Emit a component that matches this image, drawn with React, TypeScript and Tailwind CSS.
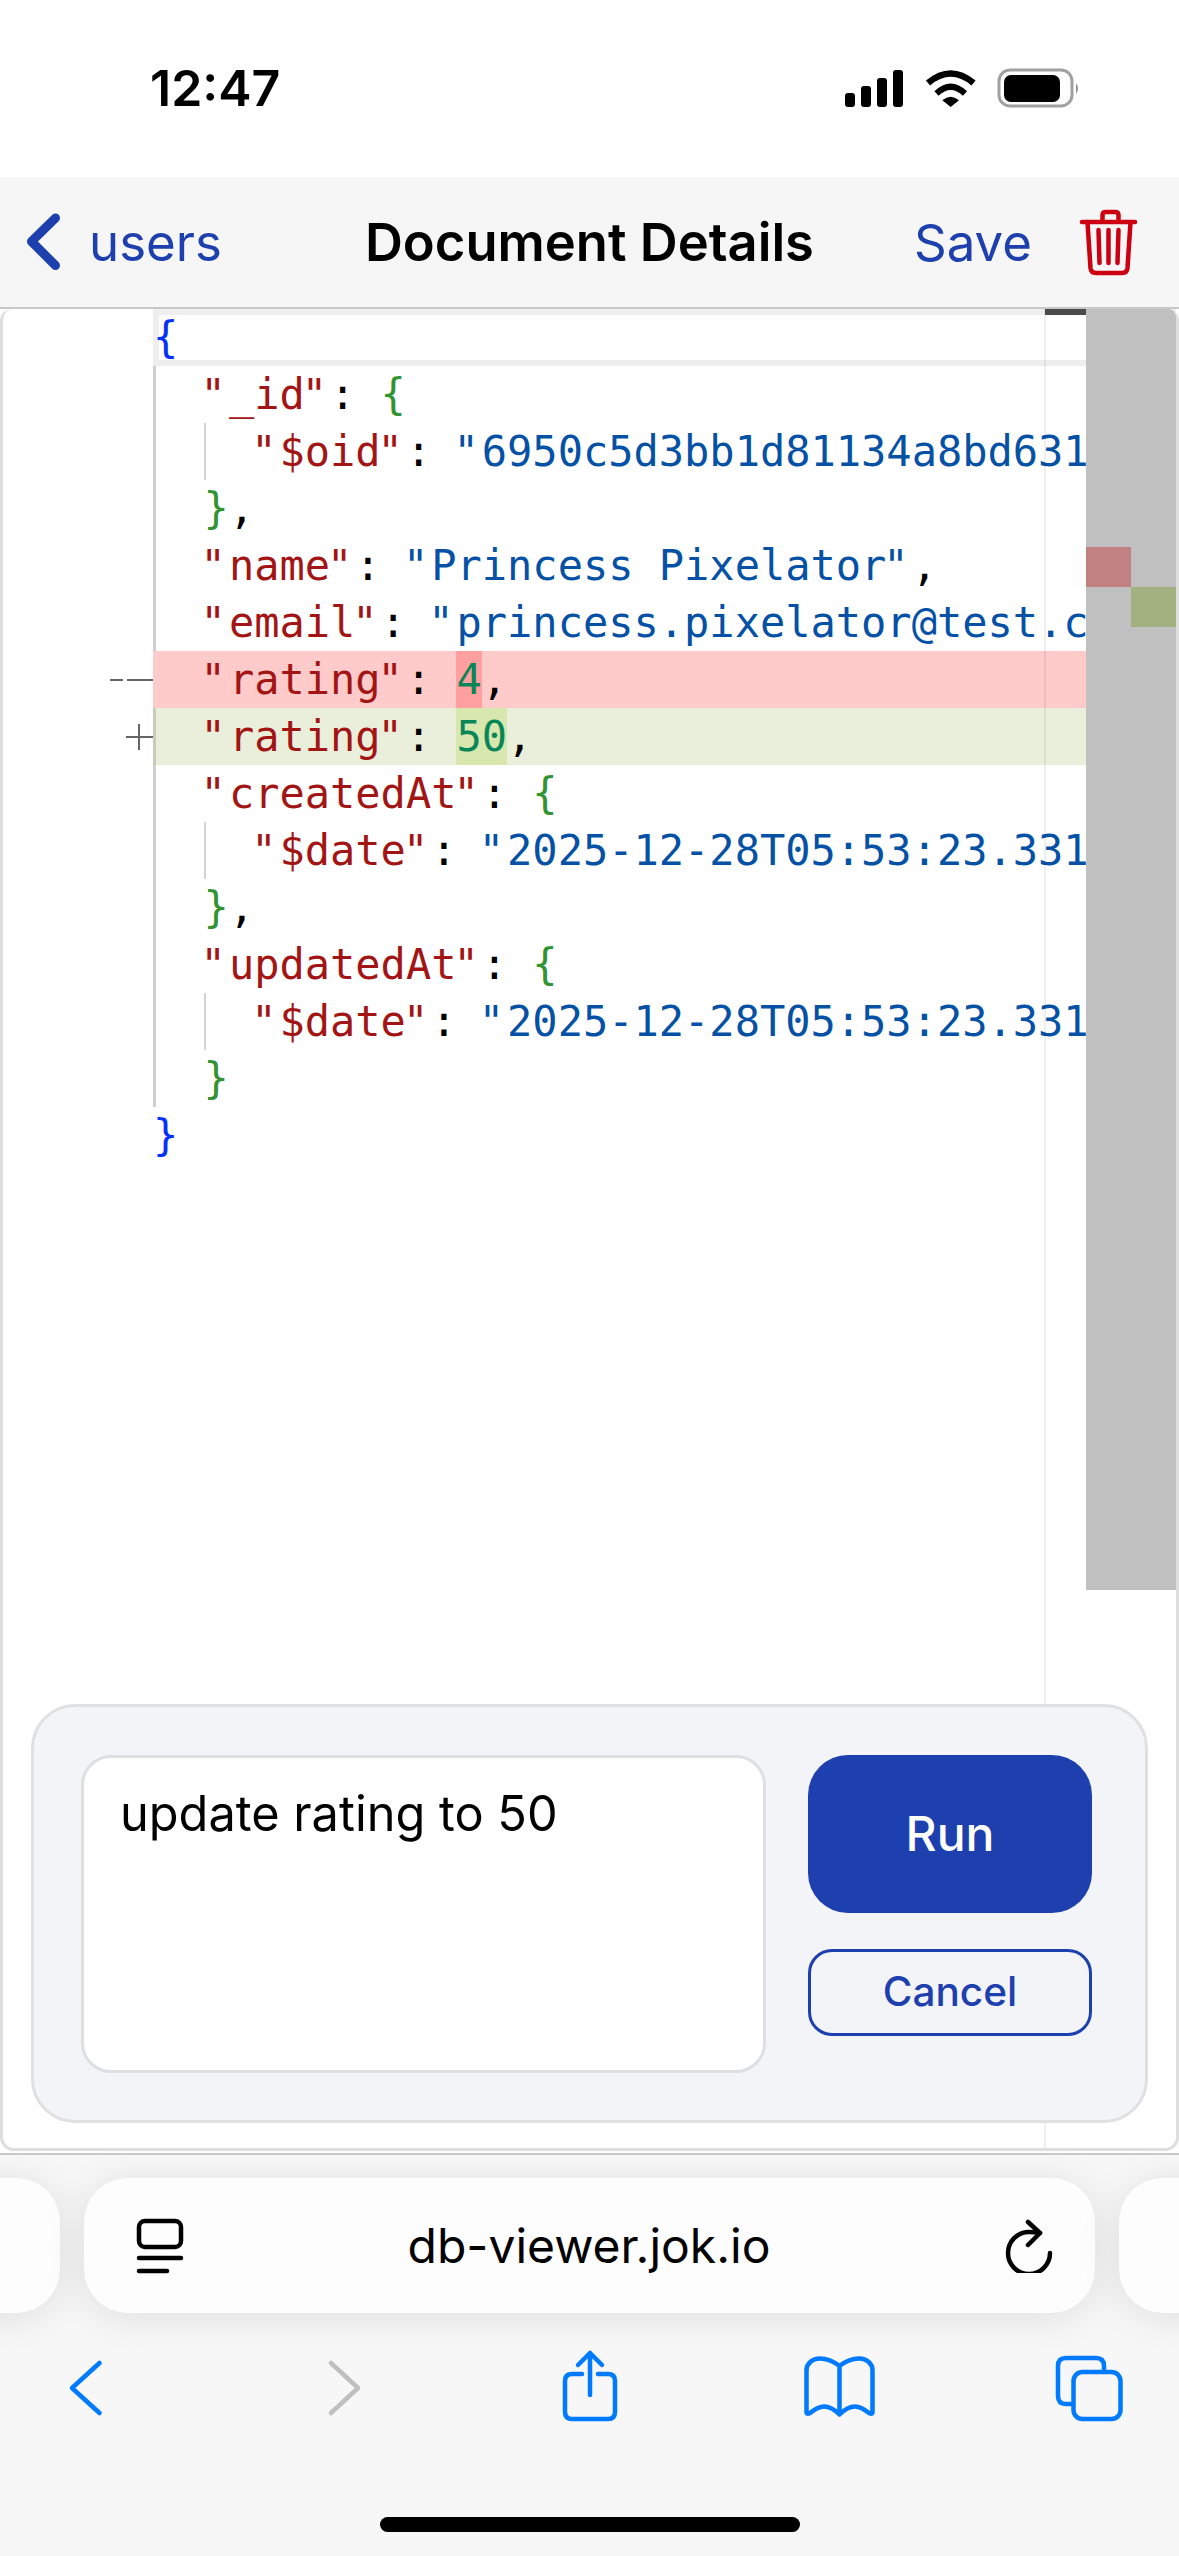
import React from "react";

// The reference's monospace draws its quote marks a little further left in their cell.
function quoted(text: string) {
  return text.split('"').map((part, i) =>
    i === 0 ? (
      <React.Fragment key={i}>{part}</React.Fragment>
    ) : (
      <React.Fragment key={i}>
        <span className="-ml-[3px] mr-[3px]">"</span>
        {part}
      </React.Fragment>
    )
  );
}

const K = ({ children }: { children: string }) => <span className="text-[#a31515]">{quoted(children)}</span>;
const S = ({ children }: { children: string }) => <span className="text-[#0451a5]">{quoted(children)}</span>;
const B1 = ({ children }: { children: React.ReactNode }) => <span className="text-[#0431fa]">{children}</span>;
const B2 = ({ children }: { children: React.ReactNode }) => <span className="text-[#319331]">{children}</span>;

function Row({
  children,
  gutter,
  cellClass = "shadow-[inset_3px_0_0_#cfcfcf]",
  guide = false,
}: {
  children: React.ReactNode;
  gutter?: React.ReactNode;
  cellClass?: string;
  guide?: boolean;
}) {
  return (
    <div className="flex h-[57px]">
      <div className="w-[150px] shrink-0 flex items-center justify-end">{gutter}</div>
      <div className={`relative flex-1 min-w-0 overflow-hidden whitespace-pre leading-[57px] ${cellClass}`}>
        {guide && <div className="absolute left-[51px] top-0 h-full w-[2px] bg-[#d3d3d3]" />}
        {children}
      </div>
    </div>
  );
}

export default function App() {
  return (
    <div className="relative flex h-[2556px] w-[1179px] flex-col overflow-hidden bg-white font-['Inter',sans-serif] text-black">
      {/* status bar */}
      <div className="flex h-[177px] shrink-0 items-start bg-white pl-[150px] pt-[59px]">
        <div className="text-[50px] font-semibold leading-[58px]">12:47</div>
        <svg className="ml-auto mr-[98px] mt-[8px]" width="240" height="42" viewBox="842 66 240 42">
          <rect x="846" y="92" width="10" height="14" rx="3" fill="#000" />
          <rect x="862" y="85" width="10" height="21" rx="3" fill="#000" />
          <rect x="878" y="77" width="10" height="29" rx="3" fill="#000" />
          <rect x="894" y="69" width="10" height="37" rx="3" fill="#000" />
          <path d="M929 82Q951.7 63 974.5 82" fill="none" stroke="#000" strokeWidth="6.5" />
          <path d="M937.5 92.5Q951.7 79 966 92.5" fill="none" stroke="#000" strokeWidth="6" />
          <path d="M943.3 99.3Q951.7 92 960 99.3L951.7 106Z" fill="#000" />
          <rect x="1000" y="69" width="73" height="36" rx="11" fill="none" stroke="#a0a0a0" strokeWidth="3" />
          <rect x="1005" y="74" width="56" height="27" rx="7" fill="#000" />
          <path d="M1077 82Q1081 87.5 1077 93Z" fill="#909090" />
        </svg>
      </div>

      {/* nav bar */}
      <div className="flex h-[132px] shrink-0 items-center border-b-2 border-[#c8c8c8] bg-[#f6f6f7] pl-[24px]">
        <svg width="40" height="64" viewBox="24 212 40 64" fill="none" stroke="#1e40af" strokeWidth="9" strokeLinecap="round" strokeLinejoin="round">
          <path d="M55.5 220L31.5 243.5L55.5 267.5" />
        </svg>
        <span className="ml-[25px] text-[51px] leading-none text-[#1e40af]">users</span>
        <span className="ml-[143px] text-[52.5px] font-semibold leading-none">Document Details</span>
        <span className="ml-auto text-[51px] leading-none text-[#1e40af]">Save</span>
        <svg className="ml-[46px] mr-[39px]" width="62" height="70" viewBox="1078 208 62 70" fill="none" stroke="#cc0011" strokeWidth="4.5" strokeLinecap="round" strokeLinejoin="round">
          <path d="M1082 223H1135" />
          <path d="M1102.5 222V216Q1102.5 213 1106 213H1115Q1118.5 213 1118.5 216V222" />
          <path d="M1087.5 223L1090.5 269Q1091 274 1096 274H1122Q1127 274 1127.5 269L1130.5 223" />
          <path d="M1098.5 231L1099.5 264M1108.5 231V264M1118.5 231L1117.5 264" />
        </svg>
      </div>

      {/* editor */}
      <div className="relative flex-1 min-h-0 rounded-t-[12px] rounded-b-[14px] border-x-[3px] border-b-[3px] border-[#dedede] bg-white font-['DejaVu_Sans_Mono',monospace] text-[42px]">
        <Row cellClass="shadow-[inset_0_0_0_6px_#eeeeee]">
          <B1>{"{"}</B1>
        </Row>
        <Row>
          {"  "}<K>{'"_id"'}</K>: <B2>{"{"}</B2>
        </Row>
        <Row guide>
          {"    "}<K>{'"$oid"'}</K>: <S>{'"6950c5d3bb1d81134a8bd6312f"'}</S>
        </Row>
        <Row>
          {"  "}<B2>{"}"}</B2>,
        </Row>
        <Row>
          {"  "}<K>{'"name"'}</K>: <S>{'"Princess Pixelator"'}</S>,
        </Row>
        <Row>
          {"  "}<K>{'"email"'}</K>: <S>{'"princess.pixelator@test.com"'}</S>,
        </Row>
        <Row
          cellClass="bg-[#ffcaca]"
          gutter={
            <svg width="44" height="10" viewBox="0 0 44 10" stroke="#666" strokeWidth="2">
              <path d="M1 5H14M18 5H44" />
            </svg>
          }
        >
          {"  "}<K>{'"rating"'}</K>: <span className="inline-block h-[57px] bg-[#ff9f9f] text-[#098658]">4</span>,
        </Row>
        <Row
          cellClass="bg-[#e9efdb] shadow-[inset_3px_0_0_#c8ccb8]"
          gutter={
            <svg width="28" height="28" viewBox="0 0 28 28" stroke="#666" strokeWidth="2">
              <path d="M1 14H28M14 1V27" />
            </svg>
          }
        >
          {"  "}<K>{'"rating"'}</K>: <span className="inline-block h-[57px] bg-[#d7e7ae] text-[#098658]">50</span>,
        </Row>
        <Row>
          {"  "}<K>{'"createdAt"'}</K>: <B2>{"{"}</B2>
        </Row>
        <Row guide>
          {"    "}<K>{'"$date"'}</K>: <S>{'"2025-12-28T05:53:23.331Z"'}</S>
        </Row>
        <Row>
          {"  "}<B2>{"}"}</B2>,
        </Row>
        <Row>
          {"  "}<K>{'"updatedAt"'}</K>: <B2>{"{"}</B2>
        </Row>
        <Row guide>
          {"    "}<K>{'"$date"'}</K>: <S>{'"2025-12-28T05:53:23.331Z"'}</S>
        </Row>
        <Row>
          {"  "}<B2>{"}"}</B2>
        </Row>
        <Row cellClass="">
          <B1>{"}"}</B1>
        </Row>

        {/* print margin line */}
        <div className="absolute left-[1041px] top-0 bottom-0 w-[2px] bg-[#00000010]" />
        {/* overview ruler */}
        <div className="absolute left-[1042px] top-0 h-[6px] w-[41px] bg-[#4a4a4a]" />
        <div className="absolute left-[1083px] top-0 h-[1281px] w-[90px] rounded-tr-[8px] bg-[#c0c0c0]">
          <div className="mt-[238px] h-[40px] w-[45px] bg-[#c18081]" />
          <div className="ml-[45px] h-[40px] w-[45px] bg-[#a3b180]" />
        </div>

        {/* prompt panel */}
        <div className="absolute left-[28px] top-[1395px] flex h-[419px] w-[1117px] items-start gap-[42px] rounded-[44px] border-[3px] border-[#e0e0e1] bg-[#f3f4f8] pl-[47px] pt-[48px] font-['Inter',sans-serif]">
          <div className="h-[318px] w-[685px] shrink-0 rounded-[30px] border-[3px] border-[#dedfe1] bg-white pl-[36px] pt-[27px] text-[48.7px] leading-[58px]">
            update rating to 50
          </div>
          <div className="flex w-[284px] flex-col gap-[36px]">
            <button className="flex h-[158px] items-center justify-center rounded-[40px] bg-[#1e40af] text-[48px] font-medium text-white">
              Run
            </button>
            <button className="flex h-[87px] items-center justify-center rounded-[24px] border-[3px] border-[#1e40af] text-[40.5px] font-medium text-[#1e40af]">
              Cancel
            </button>
          </div>
        </div>
      </div>

      {/* gap + separator */}
      <div className="h-[2px] shrink-0 bg-white" />
      <div className="h-[2px] shrink-0 bg-[#c8c8c8]" />

      {/* safari chrome */}
      <div className="flex h-[401px] shrink-0 flex-col bg-[#f7f7f8]">
        <div className="mt-[23px] flex justify-center gap-[24px]">
          <div className="h-[135px] w-[1011px] shrink-0 rounded-[44px] bg-[#fdfdfd] shadow-[0_4px_40px_rgba(0,0,0,0.10)]" />
          <div className="flex h-[135px] w-[1011px] shrink-0 items-center rounded-[44px] bg-[#fdfdfd] pl-[51px] pr-[38px] shadow-[0_4px_40px_rgba(0,0,0,0.10)]">
            <svg width="50" height="58" viewBox="135 2217 50 58" fill="none" stroke="#000" strokeWidth="4.5" strokeLinecap="round">
              <rect x="139" y="2221" width="42" height="26" rx="6" />
              <path d="M139 2258H181M139 2271H167" />
            </svg>
            <div className="flex-1 pr-[10px] text-center text-[48px] leading-none">db-viewer.jok.io</div>
            <svg width="54" height="54" viewBox="1003 2214 54 54" fill="none" stroke="#000" strokeWidth="4.5" strokeLinecap="round" strokeLinejoin="round">
              <path d="M1050 2248A21 21 0 1 1 1029 2227C1033 2227 1037 2227.5 1040 2228" />
              <path d="M1028 2217L1040 2228L1028 2240" />
            </svg>
          </div>
          <div className="h-[135px] w-[1011px] shrink-0 rounded-[44px] bg-[#fdfdfd] shadow-[0_4px_40px_rgba(0,0,0,0.10)]" />
        </div>

        <div className="mt-[35px] flex pl-[68px]" >
          <svg width="36" height="78" viewBox="68 2348 36 78" fill="none" stroke="#007aff" strokeWidth="4.5" strokeLinecap="round" strokeLinejoin="round">
            <path d="M99.5 2363L72 2388L99.5 2413" />
          </svg>
          <svg className="ml-[223px]" width="36" height="78" viewBox="327 2348 36 78" fill="none" stroke="#c0c0c0" strokeWidth="4.5" strokeLinecap="round" strokeLinejoin="round">
            <path d="M331 2363L358 2388L331 2413" />
          </svg>
          <svg className="ml-[195px]" width="64" height="78" viewBox="558 2348 64 78" fill="none" stroke="#007aff" strokeWidth="4.5" strokeLinecap="round" strokeLinejoin="round">
            <path d="M582 2374H572Q565 2374 565 2381V2412Q565 2419 572 2419H608Q615 2419 615 2412V2381Q615 2374 608 2374H598" />
            <path d="M590 2395V2353M578 2365L590 2353L602 2365" />
          </svg>
          <svg className="ml-[181px]" width="73" height="78" viewBox="803 2348 73 78" fill="none" stroke="#007aff" strokeWidth="4.5" strokeLinecap="round" strokeLinejoin="round">
            <path d="M839.5 2366C833 2361 826 2358.5 820 2358.5C812 2358.5 806.5 2364 806.5 2370V2412C806.5 2414 808 2414 810 2413C815 2409 820 2406.5 824 2406.5C830 2406.5 835 2410 839.5 2414.5C844 2410 849 2406.5 855 2406.5C859 2406.5 864 2409 869 2413C871 2414 872.5 2414 872.5 2412V2370C872.5 2364 867 2358.5 859 2358.5C853 2358.5 846 2361 839.5 2366V2414.5" />
          </svg>
          <svg className="ml-[176px]" width="74" height="78" viewBox="1052 2348 74 78" fill="none" stroke="#007aff" strokeWidth="4.5" strokeLinejoin="round">
            <path d="M1104 2370V2366Q1104 2358 1096 2358H1066Q1058 2358 1058 2366V2396Q1058 2404 1066 2404H1074" />
            <rect x="1073.5" y="2372" width="47" height="47" rx="9" />
          </svg>
        </div>

        <div className="mx-auto mt-[91px] h-[15px] w-[420px] rounded-full bg-black" />
      </div>
    </div>
  );
}
